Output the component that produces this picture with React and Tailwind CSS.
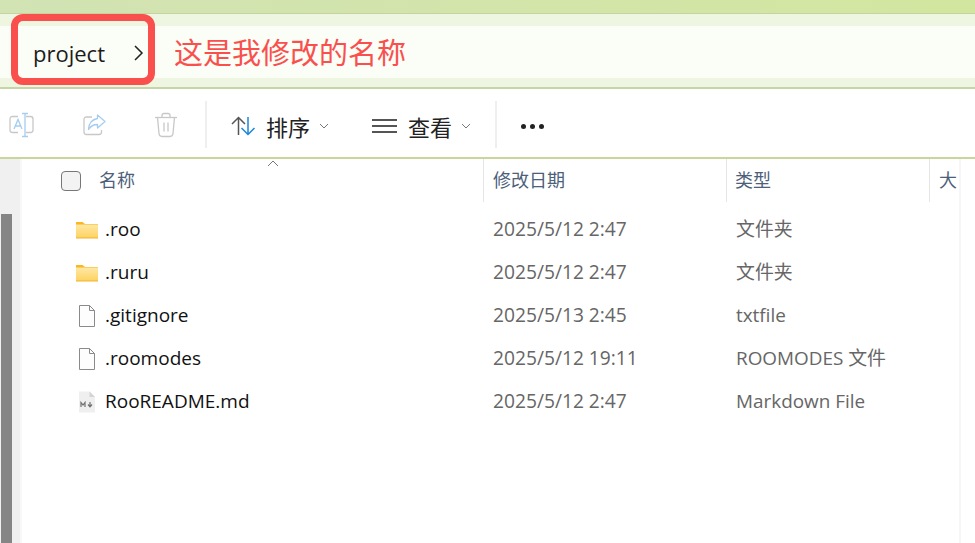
import React from 'react';

const font = { cjk: '"Noto Sans CJK SC", sans-serif' };

const files = [
    { name: '.roo', date: '2025/5/12 2:47', type: '文件夹', icon: 'folder' },
    { name: '.ruru', date: '2025/5/12 2:47', type: '文件夹', icon: 'folder' },
    { name: '.gitignore', date: '2025/5/13 2:45', type: 'txtfile', icon: 'file' },
    { name: '.roomodes', date: '2025/5/12 19:11', type: 'ROOMODES 文件', icon: 'file' },
    { name: 'RooREADME.md', date: '2025/5/12 2:47', type: 'Markdown File', icon: 'md' },
];

const FolderIcon = () => (
    <svg width="24" height="18" viewBox="0 0 24 18">
        <defs>
            <linearGradient id="folderFill" x1="0" y1="0" x2="0" y2="1">
                <stop offset="0" stopColor="#ffe9a8" />
                <stop offset="1" stopColor="#fdd25f" />
            </linearGradient>
        </defs>
        <path d="M1 1.5 Q1 1 1.5 1 H7.5 L10 3 H1 Z" fill="#fbb81e" />
        <path d="M1 3 H22.5 Q23 3 23 3.5 V17 H1 Z" fill="url(#folderFill)" />
        <path d="M1 16.5 H23 V17.5 H1 Z" fill="#f1b22c" />
        <path d="M1 3 H23 V3.7 H1 Z" fill="#f8c445" />
    </svg>
);

const FileIcon = () => (
    <svg width="18" height="22" viewBox="0 0 18 22" fill="#fdfdfd" stroke="#8a8a8a" strokeWidth="1">
        <path d="M1.5 0.5 H11.5 L16.5 5.5 V21.5 H1.5 Z" />
        <path d="M11.5 0.5 V5.5 H16.5" fill="none" />
    </svg>
);

const MdIcon = () => (
    <svg width="18" height="22" viewBox="0 0 18 22">
        <path d="M1 0.5 H11.5 L17 6 V21.5 H1 Z" fill="#efefef" />
        <path d="M11.5 0.5 V6 H17 Z" fill="#d4d4d4" />
        <path d="M3 16 V11.5 L5 14 L7 11.5 V16" fill="none" stroke="#6f6f6f" strokeWidth="1.2" />
        <path d="M12 11 V15.5 M10 13.5 L12 15.8 L14 13.5" fill="none" stroke="#6f6f6f" strokeWidth="1.2" />
    </svg>
);

const RenameIcon = () => (
    <svg width="26" height="26" viewBox="0 0 26 26" fill="none">
        <path d="M9 4.5 H3.5 Q1 4.5 1 7 V18 Q1 20.5 3.5 20.5 H9" stroke="#c8c8c8" strokeWidth="1.3" />
        <path d="M17 4.5 H21.5 Q24 4.5 24 7 V18 Q24 20.5 21.5 20.5 H17" stroke="#c8c8c8" strokeWidth="1.3" />
        <path d="M5 17 L9 7.5 L13 17 M6.3 14 H11.7" stroke="#a5cdf0" strokeWidth="1.3" />
        <path d="M16 1.5 V24.5 M13 1.5 H19 M13 24.5 H19" stroke="#a5cdf0" strokeWidth="1.3" />
    </svg>
);

const ShareIcon = () => (
    <svg width="24" height="24" viewBox="0 0 24 24" fill="none">
        <path d="M9 4 H3.5 Q1 4 1 6.5 V19 Q1 21.5 3.5 21.5 H16 Q18.5 21.5 18.5 19 V17" stroke="#c8c8c8" strokeWidth="1.3" />
        <path d="M14.5 2 L22 8.5 L14.5 15 V11.5 Q8.5 11.5 5.5 16.5 Q6 7 14.5 5.5 Z" fill="#fff" stroke="#a5cdf0" strokeWidth="1.3" strokeLinejoin="round" />
    </svg>
);

const TrashIcon = () => (
    <svg width="24" height="26" viewBox="0 0 24 26" fill="none" stroke="#c8c8c8" strokeWidth="1.3">
        <path d="M1 5.5 H23" />
        <path d="M8 5.5 V3.5 Q8 1.5 10 1.5 H14 Q16 1.5 16 3.5 V5.5" />
        <path d="M3.5 5.5 L5 21.5 Q5.3 24.5 8 24.5 H16 Q18.7 24.5 19 21.5 L20.5 5.5" />
        <path d="M10 10.5 V19.5 M14 10.5 V19.5" />
    </svg>
);

const SortIcon = () => (
    <svg width="25" height="20" viewBox="0 0 25 20" fill="none" strokeWidth="1.5">
        <path d="M7.5 19 V1.5 M1 8 L7.5 1.5 L14 8" stroke="#555" />
        <path d="M17 18.5 V1 M10.5 12 L17 18.5 L23.5 12" stroke="#1a86dc" />
    </svg>
);

const Caret = () => (
    <svg width="10" height="6" viewBox="0 0 10 6" fill="none" stroke="#777" strokeWidth="1">
        <path d="M1 1 L5 5 L9 1" />
    </svg>
);

const Divider = () => <div className="w-[2px] h-[47px] -mt-[4px] bg-[#efefef]" />;

const App = () => {
    return (
        <div className="relative w-[975px] h-[543px] overflow-hidden bg-white flex flex-col" style={{ fontFamily: '"Open Sans", ' + font.cjk }}>
            {/* Window title band */}
            <div className="h-[14px] bg-gradient-to-r from-[#d2e3b4] to-[#d3e69f] border-b border-[#c4d4a0]" />
            <div className="h-[75px] pt-[3px] bg-[#eef5e0] border-b-2 border-[#c7d4a6] flex flex-col justify-center">
                <div className="h-[52px] pt-[2px] bg-[#fbfdf7] flex items-center pl-[33px]">
                    <span className="text-[22px] text-[#1b1b1b] w-[100px]">project</span>
                    <svg width="11" height="16" viewBox="0 0 11 16" fill="none" stroke="#222" strokeWidth="1.5">
                        <path d="M2 1 L9 8 L2 15" />
                    </svg>
                    <span className="ml-[30px] text-[29px] text-[#f9504d] whitespace-nowrap">这是我修改的名称</span>
                </div>
            </div>

            {/* Red annotation box */}
            <div className="absolute left-[11px] top-[14px] w-[144px] h-[71px] rounded-[12px] border-[7px] border-[#f9504d]" />

            {/* Command bar */}
            <div className="h-[70px] pt-[6px] flex items-center shrink-0 border-b-2 border-[#c8d69c]">
                <div className="w-[205px] -mt-[3px] flex items-center pl-[9px]">
                    <RenameIcon />
                    <div className="ml-[48px]"><ShareIcon /></div>
                    <div className="ml-[47px]"><TrashIcon /></div>
                </div>
                <Divider />
                <div className="ml-[24px] flex items-center w-[118px]">
                    <SortIcon />
                    <span className="ml-[10px] mt-[2px] text-[22px] leading-none text-[#222]">排序</span>
                    <div className="ml-[9px]"><Caret /></div>
                </div>
                <div className="ml-[23px] flex items-center w-[123px]">
                    <div className="flex flex-col gap-[4px] w-[25px]">
                        <div className="h-[2px] bg-[#555]" />
                        <div className="h-[2px] bg-[#555]" />
                        <div className="h-[2px] bg-[#555]" />
                    </div>
                    <span className="ml-[11px] mt-[2px] text-[22px] leading-none text-[#222]">查看</span>
                    <div className="ml-[9px]"><Caret /></div>
                </div>
                <Divider />
                <div className="ml-[24px] flex gap-[4px]">
                    <div className="w-[5px] h-[5px] rounded-full bg-[#222]" />
                    <div className="w-[5px] h-[5px] rounded-full bg-[#222]" />
                    <div className="w-[5px] h-[5px] rounded-full bg-[#222]" />
                </div>
            </div>

            {/* File list */}
            <div className="flex-1 flex min-h-0">
                {/* Nav pane scrollbar */}
                <div className="w-[20px] bg-[#f0f0f0] pt-[55px] pl-[1px]">
                    <div className="w-[11px] h-full bg-[#858585]" />
                </div>
                <div className="w-[2px] bg-[#f8f8f8]" />

                <div className="w-[937px] relative">
                    {/* Sort arrow */}
                    <svg className="absolute left-[245px] top-[1px]" width="12" height="7" viewBox="0 0 12 7" fill="none" stroke="#777" strokeWidth="1">
                        <path d="M1 6 L6 1 L11 6" />
                    </svg>

                    <div className="h-[43px] flex text-[18px] text-[#4c607a]">
                        <div className="w-[462px] flex items-center border-r border-[#e5e5e5] pl-[39px]">
                            <div className="w-[20px] h-[20px] rounded-[4px] border border-[#777] bg-[#f3f3f3]" />
                            <span className="ml-[18px]">名称</span>
                        </div>
                        <div className="w-[243px] flex items-center border-r border-[#e5e5e5] pl-[9px]">修改日期</div>
                        <div className="w-[203px] flex items-center border-r border-[#e5e5e5] pl-[8px]">类型</div>
                        <div className="flex items-center pl-[9px]">大</div>
                    </div>

                    <div className="pt-[6px]">
                        {files.map((file) => (
                            <div key={file.name} className="h-[43px] flex items-center">
                                <div className="w-[462px] flex items-center pl-[53px]">
                                    <div className="w-[24px] flex justify-center">
                                        {file.icon === 'folder' && <FolderIcon />}
                                        {file.icon === 'file' && <FileIcon />}
                                        {file.icon === 'md' && <MdIcon />}
                                    </div>
                                    <span className="ml-[6px] text-[19px] text-[#111]">{file.name}</span>
                                </div>
                                <div className="w-[243px] pl-[9px] text-[19.2px] text-[#666]">{file.date}</div>
                                <div className="pl-[9px] text-[18.9px] text-[#666]">{file.type}</div>
                            </div>
                        ))}
                    </div>
                </div>
                <div className="w-[2px] bg-[#f6f6f6]" />
            </div>
        </div>
    );
};

export default App;
